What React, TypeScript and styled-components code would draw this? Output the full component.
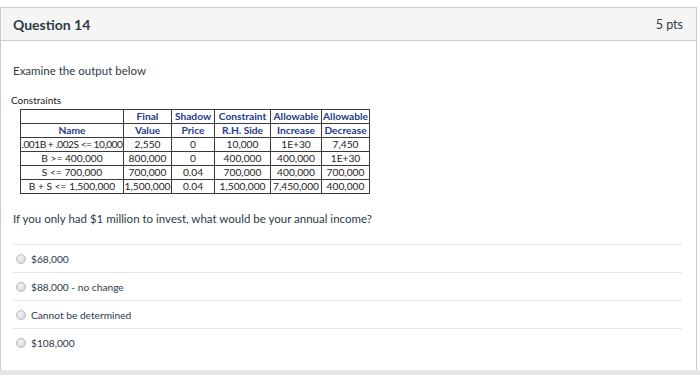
import * as React from 'react';
import styled, { createGlobalStyle } from 'styled-components';

type Row = { name: string; final: string; shadow: string; rhs: string; inc: string; dec: string; tight?: boolean };

const rows: Row[] = [
    { name: '.001B + .002S <= 10,000', final: '2,550', shadow: '0', rhs: '10,000', inc: '1E+30', dec: '7,450', tight: true },
    { name: 'B >= 400,000', final: '800,000', shadow: '0', rhs: '400,000', inc: '400,000', dec: '1E+30' },
    { name: 'S <= 700,000', final: '700,000', shadow: '0.04', rhs: '700,000', inc: '400,000', dec: '700,000' },
    { name: 'B + S <= 1,500,000', final: '1,500,000', shadow: '0.04', rhs: '1,500,000', inc: '7,450,000', dec: '400,000' },
];

const answers = ['$68,000', '$88,000 - no change', 'Cannot be determined', '$108,000'];

const App = () => {
    return (
        <>
            <GlobalStyle />
            <Panel>
                <Header>
                    <Title>Question 14</Title>
                    <Points>5 pts</Points>
                </Header>
                <Body>
                    <Intro>Examine the output below</Intro>
                    <Figure>
                        <FigureLabel>Constraints</FigureLabel>
                        <Table>
                            <colgroup>
                                <col style={{ width: 103 }} />
                                <col style={{ width: 48 }} />
                                <col style={{ width: 43 }} />
                                <col style={{ width: 56 }} />
                                <col style={{ width: 51 }} />
                                <col style={{ width: 48 }} />
                            </colgroup>
                            <thead>
                                <tr>
                                    <Head></Head>
                                    <Head>Final</Head>
                                    <Head>Shadow</Head>
                                    <Head>Constraint</Head>
                                    <Head>Allowable</Head>
                                    <Head>Allowable</Head>
                                </tr>
                                <tr>
                                    <Head>Name</Head>
                                    <Head>Value</Head>
                                    <Head>Price</Head>
                                    <Head>R.H. Side</Head>
                                    <Head>Increase</Head>
                                    <Head>Decrease</Head>
                                </tr>
                            </thead>
                            <tbody>
                                {rows.map(r => (
                                    <tr key={r.name}>
                                        <Cell tight={r.tight}>{r.name}</Cell>
                                        <Cell>{r.final}</Cell>
                                        <Cell>{r.shadow}</Cell>
                                        <Cell>{r.rhs}</Cell>
                                        <Cell>{r.inc}</Cell>
                                        <Cell>{r.dec}</Cell>
                                    </tr>
                                ))}
                            </tbody>
                        </Table>
                    </Figure>
                    <Question>If you only had $1 million to invest, what would be your annual income?</Question>
                    <Answers>
                        {answers.map(a => (
                            <Answer key={a}>
                                <Radio />
                                <AnswerText>{a}</AnswerText>
                            </Answer>
                        ))}
                    </Answers>
                </Body>
            </Panel>
            <NextBar />
        </>
    );
};

export default App;


/** styles below */

const GlobalStyle = createGlobalStyle`
    body {
        margin: 0;
        background: #ffffff;
        font-family: Lato, "Noto Sans", sans-serif;
        color: #2d3b45;
    }
`;

const Panel = styled.div`
    margin: 7px 3px 0 0;
    border: 1px solid #c7cdd1;
    border-bottom: none;
    background: #ffffff;
`;

const Header = styled.div`
    display: flex;
    justify-content: space-between;
    align-items: center;
    height: 32px;
    padding: 0 13px 0 12px;
    background: #f5f5f5;
    border-bottom: 1px solid #c7cdd1;
`;

const Title = styled.div`
    font-size: 14px;
    font-weight: 700;
    color: #2d3b45;
`;

const Points = styled.div`
    font-size: 12.5px;
    color: #2d3b45;
`;

const Body = styled.div`
    padding: 22px 14px 14px 12px;
`;

const Intro = styled.div`
    font-size: 11.5px;
    line-height: 16px;
    color: #2d3b45;
`;

const Figure = styled.div`
    margin-top: 15px;
`;

const FigureLabel = styled.div`
    margin-left: -2px;
    font-size: 10px;
    line-height: 12px;
    color: #222222;
    margin-bottom: 3px;
`;

const Table = styled.table`
    margin-left: 7px;
    border-collapse: collapse;
    table-layout: fixed;
    width: 349px;
    font-size: 10.2px;
`;

const Head = styled.th`
    height: 13px;
    padding: 0;
    border: 1px solid #3a3a3a;
    text-align: center;
    font-weight: 700;
    color: #233a8a;
    line-height: 13px;
    white-space: nowrap;
`;

const Cell = styled.td<{ tight?: boolean }>`
    height: 13px;
    padding: 0;
    border: 1px solid #3a3a3a;
    text-align: center;
    color: #1e1e1e;
    line-height: 13px;
    white-space: nowrap;
    overflow: visible;
    letter-spacing: ${props => props.tight ? '-0.5px' : '0'};
`;

const Question = styled.div`
    margin-top: 16px;
    font-size: 11.5px;
    line-height: 18px;
    color: #2d3b45;
`;

const Answers = styled.div`
    margin-top: 16px;
`;

const Answer = styled.div`
    display: flex;
    align-items: center;
    gap: 5px;
    height: 27px;
    padding-left: 3px;
    border-top: 1px solid #e3e6e8;
`;

const Radio = styled.span`
    display: inline-block;
    width: 8px;
    height: 8px;
    border-radius: 50%;
    border: 1px solid #b9b9b9;
    background: radial-gradient(circle at 40% 35%, #f4f4f4 0%, #d6d6d6 90%);
`;

const AnswerText = styled.span`
    font-size: 10.2px;
    color: #2d3b45;
`;

const NextBar = styled.div`
    height: 20px;
    background: #e6e6e6;
`;
